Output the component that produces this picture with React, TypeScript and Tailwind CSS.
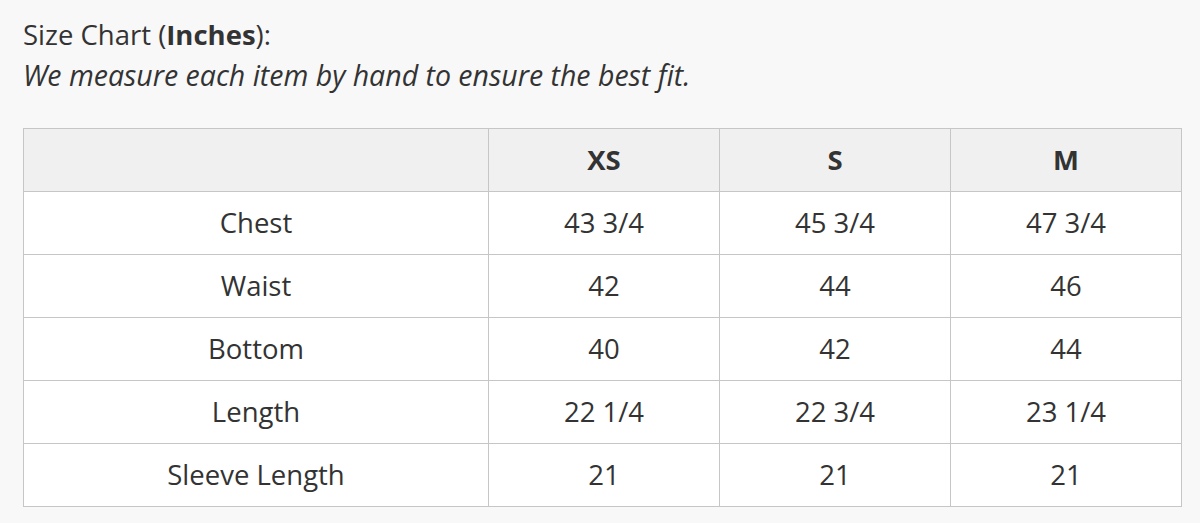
const sizes = ["XS", "S", "M"];

const rows: { label: string; values: string[] }[] = [
  { label: "Chest", values: ["43 3/4", "45 3/4", "47 3/4"] },
  { label: "Waist", values: ["42", "44", "46"] },
  { label: "Bottom", values: ["40", "42", "44"] },
  { label: "Length", values: ["22 1/4", "22 3/4", "23 1/4"] },
  { label: "Sleeve Length", values: ["21", "21", "21"] },
];

export default function App() {
  return (
    <div
      className="w-[1200px] h-[523px] bg-[#f8f8f8] text-[#333333] pl-[23px] pr-[20px] pt-[14px]"
      style={{ fontFamily: '"Open Sans", "Noto Sans", sans-serif' }}
    >
      <p className="text-[27.5px] leading-[41px]">
        Size Chart (<strong className="font-bold">Inches</strong>):
      </p>
      <p className="text-[28.5px] leading-[41px] italic">
        We measure each item by hand to ensure the best fit.
      </p>

      <table className="mt-[32px] w-full border-collapse table-fixed text-[27.5px]">
        <colgroup>
          <col className="w-[465px]" />
          <col className="w-[231px]" />
          <col className="w-[231px]" />
          <col className="w-[231px]" />
        </colgroup>
        <thead>
          <tr className="bg-[#f0f0f0] h-[63px]">
            <th className="border border-[#c6c6c6]" />
            {sizes.map((s) => (
              <th key={s} className="border border-[#c6c6c6] font-bold text-center">
                {s}
              </th>
            ))}
          </tr>
        </thead>
        <tbody>
          {rows.map((r) => (
            <tr key={r.label} className="bg-white h-[63px]">
              <td className="border border-[#c6c6c6] text-center leading-[40px]">{r.label}</td>
              {r.values.map((v, i) => (
                <td key={i} className="border border-[#c6c6c6] text-center leading-[40px]">
                  {v}
                </td>
              ))}
            </tr>
          ))}
        </tbody>
      </table>
    </div>
  );
}
